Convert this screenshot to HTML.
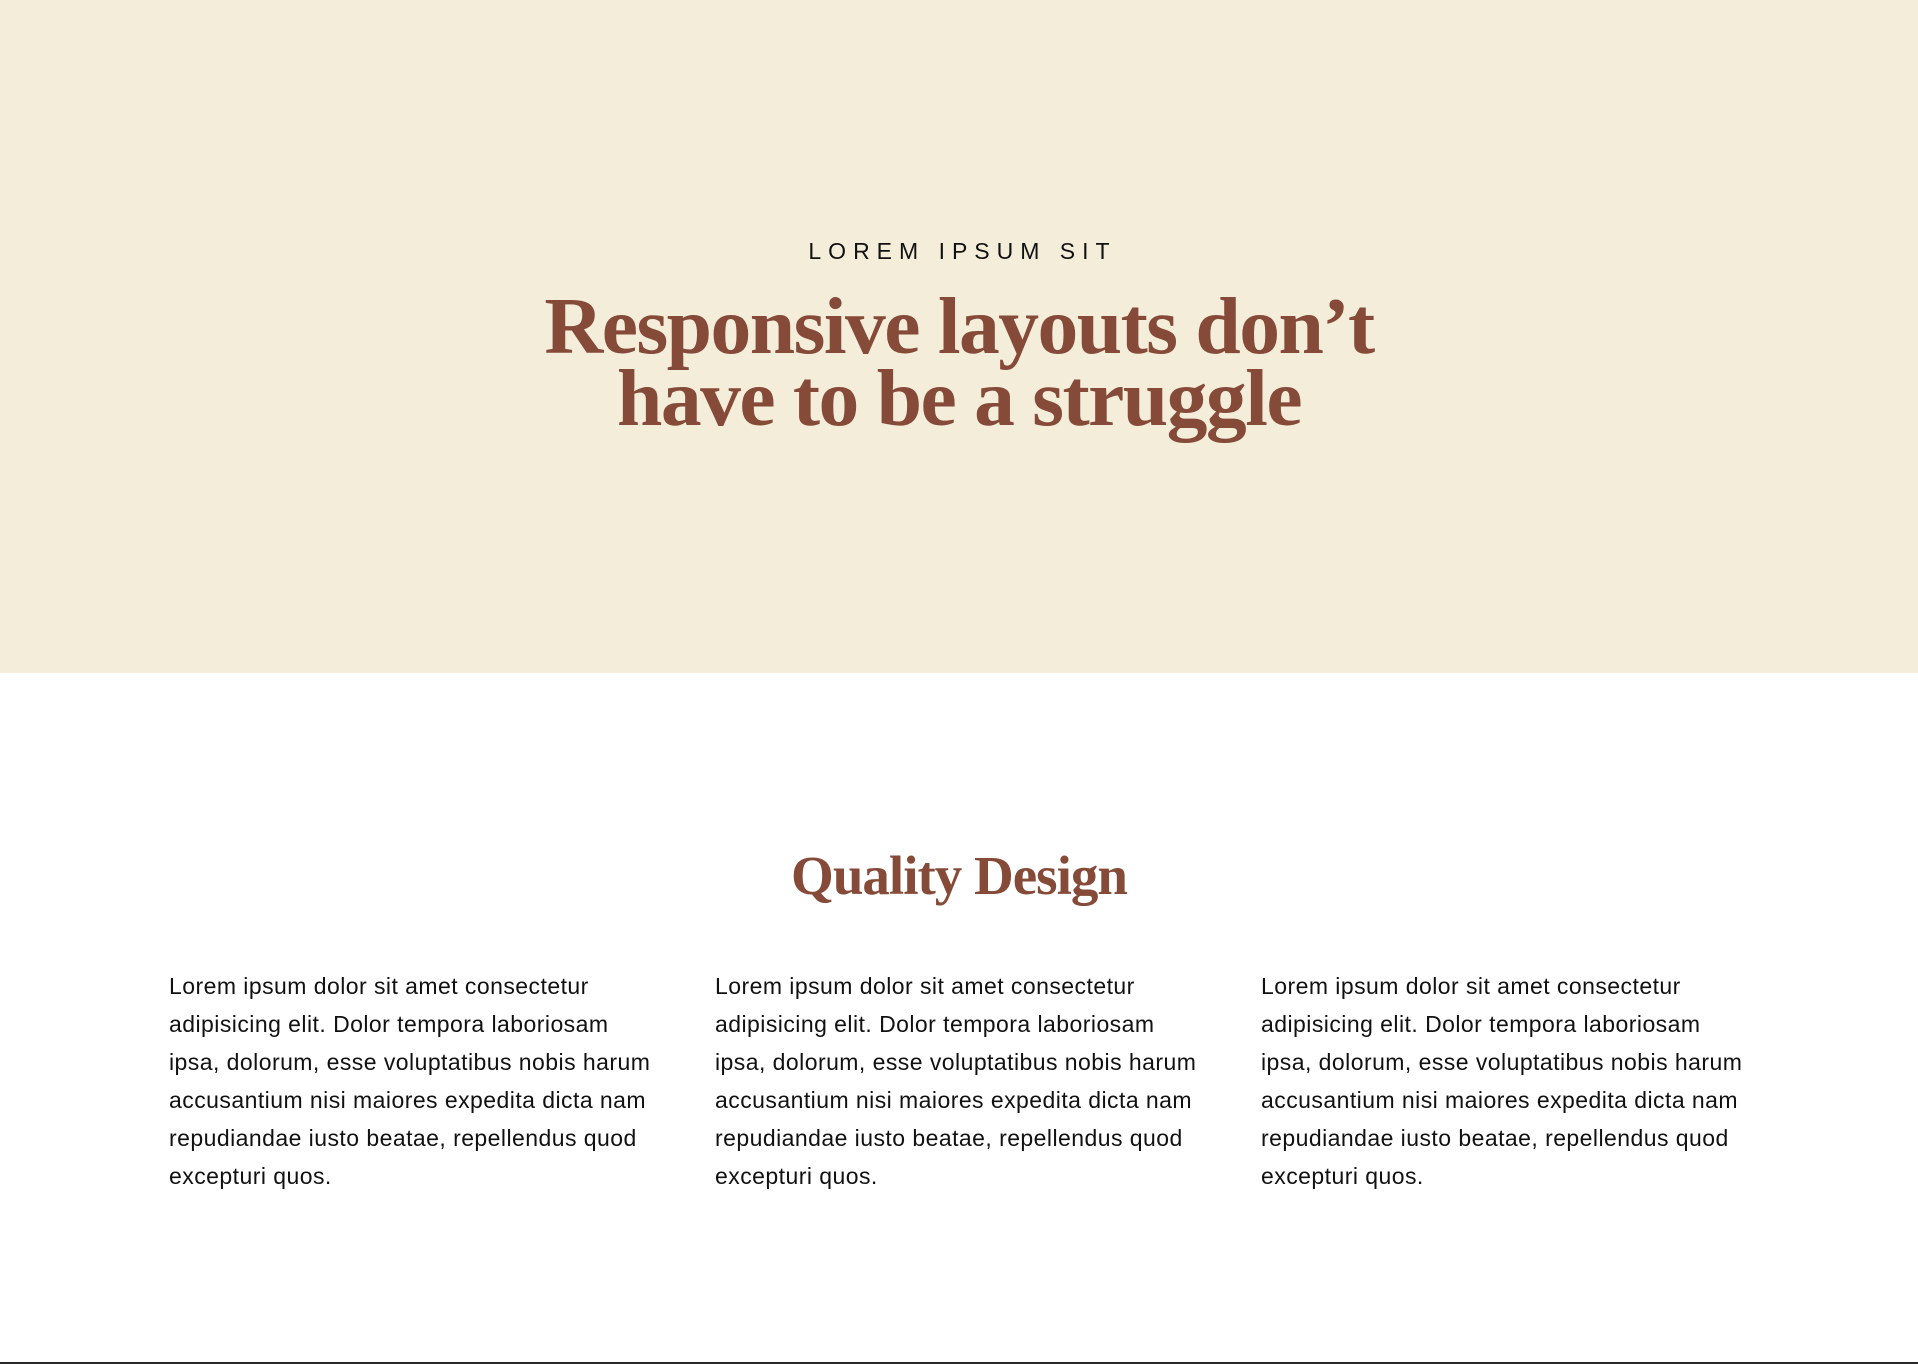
<!DOCTYPE html>
<html><head><meta charset="utf-8"><style>
html,body{margin:0;padding:0;}
body{width:1918px;height:1364px;position:relative;overflow:hidden;background:#fff;font-family:"Liberation Sans",sans-serif;}
.hero{position:absolute;left:0;top:0;width:1918px;height:673px;background:#f3edda;}
.tag{position:absolute;top:238px;left:0;width:1918px;text-align:center;font-size:23px;letter-spacing:7px;color:#111;padding-left:7px;box-sizing:border-box;}
h1{position:absolute;top:291px;left:0;width:1918px;margin:0;text-align:center;font-family:"Liberation Serif",serif;font-weight:bold;font-size:80px;line-height:72px;color:#854a38;letter-spacing:-1.5px;transform:scaleX(1.02);}
h2{position:absolute;top:845px;left:0;width:1918px;margin:0;text-align:center;font-family:"Liberation Serif",serif;font-weight:bold;font-size:55px;line-height:62px;color:#854a38;letter-spacing:-1px;}
.col{position:absolute;top:967px;width:540px;font-size:23px;letter-spacing:0.45px;line-height:38px;color:#111;white-space:nowrap;}
.bar{position:absolute;left:0;top:1362px;width:1918px;height:2px;background:#2a2a2a;}
</style></head><body>
<div class="hero">
<div class="tag">LOREM IPSUM SIT</div>
<h1>Responsive layouts don’t<br>have to be a struggle</h1>
</div>
<h2>Quality Design</h2>
<div class="col" style="left:169px">Lorem ipsum dolor sit amet consectetur<br>adipisicing elit. Dolor tempora laboriosam<br>ipsa, dolorum, esse voluptatibus nobis harum<br>accusantium nisi maiores expedita dicta nam<br>repudiandae iusto beatae, repellendus quod<br>excepturi quos.</div>
<div class="col" style="left:715px">Lorem ipsum dolor sit amet consectetur<br>adipisicing elit. Dolor tempora laboriosam<br>ipsa, dolorum, esse voluptatibus nobis harum<br>accusantium nisi maiores expedita dicta nam<br>repudiandae iusto beatae, repellendus quod<br>excepturi quos.</div>
<div class="col" style="left:1261px">Lorem ipsum dolor sit amet consectetur<br>adipisicing elit. Dolor tempora laboriosam<br>ipsa, dolorum, esse voluptatibus nobis harum<br>accusantium nisi maiores expedita dicta nam<br>repudiandae iusto beatae, repellendus quod<br>excepturi quos.</div>
<div class="bar"></div>
</body></html>
